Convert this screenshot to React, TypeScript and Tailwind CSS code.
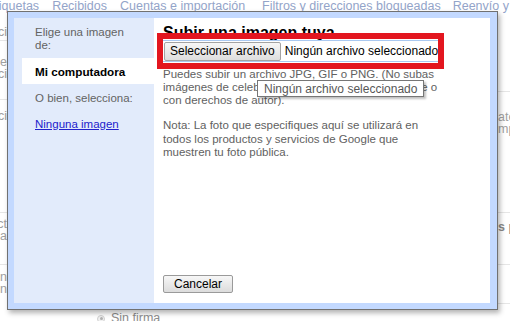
import React from "react";

function StripText({ children, bold }: { children: React.ReactNode; bold?: boolean }) {
  return (
    <div className={`whitespace-nowrap text-[12.5px] leading-[12px] ${bold ? "font-bold text-[#8a8a8a]" : "text-[#a0a0a0]"}`}>
      {children}
    </div>
  );
}

export default function App() {
  return (
    <div className="relative w-[510px] h-[321px] overflow-hidden bg-white font-['Liberation_Sans',Arial,sans-serif]">
      {/* Background page */}
      <div className="flex flex-col h-full">
        <div className="h-[12px] flex items-start whitespace-nowrap text-[12.5px] leading-[14px] text-[#93a4c9] -mt-[1px] overflow-visible">
          <span className="shrink-0 ml-[-13px]">Etiquetas</span>
          <span className="shrink-0 ml-[13px]">Recibidos</span>
          <span className="shrink-0 ml-[13px]">Cuentas e importación</span>
          <span className="shrink-0 ml-[17px]">Filtros y direcciones bloqueadas</span>
          <span className="shrink-0 ml-[12px]">Reenvío y correo POP/IMAP</span>
        </div>
        <div className="flex flex-1">
          {/* left strip */}
          <div className="w-[7px] overflow-hidden flex flex-col">
            <div className="h-[30px] border-b border-[#e6e6e6] flex flex-col items-end justify-end pb-[2px]">
              <StripText>ci</StripText>
            </div>
            <div className="h-[59px] border-b border-[#e6e6e6] flex flex-col items-end pt-[15px]">
              <StripText>e</StripText>
              <StripText>ci</StripText>
            </div>
            <div className="h-[113px] border-b border-[#e6e6e6] flex flex-col items-end pt-[10px]">
              <StripText>ci</StripText>
            </div>
            <div className="h-[52px] border-b border-[#e6e6e6] flex flex-col items-end pt-[5px]">
              <StripText>ct</StripText>
              <StripText>ca</StripText>
            </div>
            <div className="flex-1 flex flex-col items-end pt-[6px]">
              <StripText>n</StripText>
              <StripText>n</StripText>
            </div>
          </div>
          {/* middle */}
          <div className="flex-1 flex flex-col justify-end">
            <div className="flex items-center gap-[6px] pl-[90px] -mb-[7px] text-[12.5px] text-[#8c8c8c]">
              <span className="w-[8px] h-[8px] rounded-full border border-[#cfcfcf] bg-[#f0f0f0] flex items-center justify-center">
                <span className="w-[3px] h-[3px] rounded-full bg-[#b0b0b0]" />
              </span>
              <span>Sin firma</span>
            </div>
          </div>
          {/* right strip */}
          <div className="w-[12px] overflow-hidden flex flex-col">
            <div className="h-[81px] border-b border-[#e6e6e6]" />
            <div className="h-[121px] border-b border-[#e6e6e6] pt-[19px]">
              <StripText>ate</StripText>
              <StripText>mp</StripText>
            </div>
            <div className="h-[52px] border-b border-[#e6e6e6] pt-[8px]">
              <StripText bold>s p</StripText>
            </div>
            <div className="h-[39px] border-b border-[#e6e6e6]" />
          </div>
        </div>
      </div>

      {/* Dialog */}
      <div className="absolute left-[7px] top-[11px] w-[491px] h-[299px] border border-[#717171] bg-[#c3d9ff] pl-[6px] pt-[6px] pr-[7px] pb-[6px] shadow-[2px_3px_5px_rgba(0,0,0,0.3)] flex">
        <div className="flex flex-1">
          {/* Left nav */}
          <div className="w-[140px] bg-[#e2ebfb] flex flex-col pt-[8px] text-[11.5px] leading-[13px]">
            <div className="pl-[21px] text-[#636363]">
              Elige una imagen
              <br />
              de:
            </div>
            <div className="ml-[8px] mt-[6px] h-[26px] bg-white pl-[13px] flex items-center font-bold text-[11.7px] text-black">
              Mi computadora
            </div>
            <div className="pl-[21px] mt-[8px] text-[#636363]">O bien, selecciona:</div>
            <div className="pl-[21px] mt-[13px]">
              <span className="text-[#2222cc] underline">Ninguna imagen</span>
            </div>
          </div>
          {/* Right content */}
          <div className="flex-1 bg-white flex flex-col pl-[9px] pt-[7px] pb-[10px]">
            <div className="text-[16px] leading-[16px] font-bold text-black">Subir una imagen tuya</div>
            <div className="flex items-center self-start outline outline-1 outline-[#a9c8f0] h-[20px] pl-[1px] pr-[1px]">
              <div className="h-[19px] px-[5px] flex items-center border border-[#a3a3a3] rounded-[2px] bg-linear-to-b from-[#f7f7f7] to-[#dddddd] text-[12px] text-black">
                Seleccionar archivo
              </div>
              <span className="ml-[4px] text-[12px] text-black whitespace-nowrap">Ningún archivo seleccionado</span>
            </div>
            <p className="mt-[7px] w-[286px] text-[11.5px] leading-[13px] text-[#616161]">
              Puedes subir un archivo JPG, GIF o PNG. (No subas imágenes de celebridades, desnudos, obras de arte o con derechos de autor).
            </p>
            <p className="mt-[12px] w-[286px] text-[11.5px] leading-[13.5px] text-[#616161]">
              Nota: La foto que especifiques aquí se utilizará en todos los productos y servicios de Google que muestren tu foto pública.
            </p>
            <div className="mt-auto">
              <button className="w-[70px] h-[18px] flex items-center justify-center border border-[#9a9a9a] rounded-[2px] bg-linear-to-b from-[#f7f7f7] to-[#dcdcdc] text-[12px] text-black">
                Cancelar
              </button>
            </div>
          </div>
        </div>
      </div>

      {/* Red annotation box */}
      <div className="absolute left-[157px] top-[33px] w-[287px] h-[36px] border-[6px] border-[#e3161f]" />

      {/* Tooltip */}
      <div className="absolute left-[257px] top-[80px] w-[167px] h-[17px] bg-white border border-[#767676] shadow-[2px_2px_2px_rgba(0,0,0,0.25)] flex items-center pl-[6px] text-[12px] text-[#575757] whitespace-nowrap">
        Ningún archivo seleccionado
      </div>
    </div>
  );
}
